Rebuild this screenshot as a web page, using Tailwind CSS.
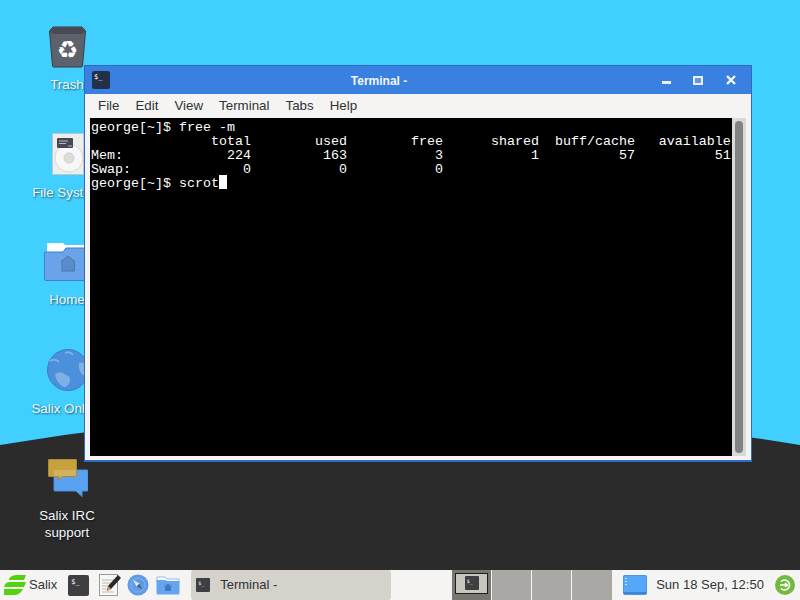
<!DOCTYPE html>
<html lang="en">
  <head>
    <meta charset="UTF-8" />
    <title>Salix Desktop</title>
    <script src="https://cdn.jsdelivr.net/npm/@tailwindcss/browser@4"></script>
  </head>
  <body class="bg-[#40cfff]">
    <div class="relative w-[800px] h-[600px] overflow-hidden bg-[#40cfff] font-['Liberation_Sans',sans-serif]">
      <!-- wallpaper hill -->
      <svg class="absolute left-0 top-0" width="800" height="600" viewBox="0 0 800 600">
        <path d="M0 445 Q 400 378 800 445 L800 600 L0 600 Z" fill="#2b2b2b" />
      </svg>

      <!-- Desktop icons -->
      <div class="absolute left-[17px] top-[26px] w-[100px] flex flex-col items-center text-[13.330px] leading-[16px] text-[#eef8fb] [text-shadow:1px_1px_2px_rgba(0,0,0,0.6)]">
        <svg class="ml-[2px]" width="38" height="42" viewBox="0 0 38 42">
          <path d="M0.5 5 L4 1 H33 L36.500 5 L33.500 40 Q33.400 41 32 41 H5 Q3.600 41 3.500 40 Z" fill="#5d616b" stroke="#3a3d45" />
          <path d="M1 6 L4 2 H33 L36 6 L32 8 H5 Z" fill="#474a52" />
          <text x="18.500" y="32" text-anchor="middle" font-family="DejaVu Sans" font-size="24" fill="#fff" style="text-shadow:none">♻</text>
        </svg>
        <span class="mt-[9px]">Trash</span>
      </div>
      <div class="absolute left-[17px] top-[133px] w-[100px] flex flex-col items-center text-[13.330px] leading-[16px] text-[#eef8fb] [text-shadow:1px_1px_2px_rgba(0,0,0,0.6)]">
        <svg class="ml-[2px]" width="32" height="42" viewBox="0 0 32 42">
          <rect x="0.5" y="0.5" width="31" height="41" rx="1" fill="#eceded" stroke="#c3c6c8" />
          <circle cx="17" cy="25" r="14" fill="#f7f7f7" stroke="#d8d8d8" />
          <circle cx="17" cy="25" r="5" fill="#dcdcdc" stroke="#cfcfcf" />
          <rect x="5" y="5" width="16" height="10" rx="1" fill="#454852" />
          <path d="M7 8 H16 M7 10.5 H14 M16 13 H20" stroke="#b5b7bc" stroke-width="1" />
        </svg>
        <span class="mt-[10px] whitespace-nowrap">File System</span>
      </div>
      <div class="absolute left-[17px] top-[243px] w-[100px] flex flex-col items-center text-[13.330px] leading-[16px] text-[#eef8fb] [text-shadow:1px_1px_2px_rgba(0,0,0,0.6)]">
        <svg class="ml-[2px]" width="48" height="39" viewBox="0 0 48 39">
          <path d="M3 9 V1 Q3 0 4 0 H19 L21 2 H48 V10 H3 Z" fill="#fff" />
          <path d="M1.500 9 H19 L22 5 H47.500 V37.500 H1.500 Q0.500 37.500 0.500 36.500 V10 Q0.500 9 1.500 9 Z" fill="#6ba3ea" stroke="#3f7fd0" />
          <path d="M17.5 18 L24 13 L30.500 18 V28 H18 V18 Z" fill="#5a8cc9" stroke="#4a78b2" />
        </svg>
        <span class="mt-[10px]">Home</span>
      </div>
      <div class="absolute left-[17px] top-[349px] w-[100px] flex flex-col items-center text-[13.330px] leading-[16px] text-[#eef8fb] [text-shadow:1px_1px_2px_rgba(0,0,0,0.6)]">
        <svg class="ml-[2px]" width="42" height="42" viewBox="0 0 42 42">
          <circle cx="21" cy="21" r="20.500" fill="#4c8fdb" stroke="#3f7cc6" />
          <path d="M8 25 Q14 21 19 26 Q24 27 23 33 Q19 40 15 37 Q9 33 8 25 Z" fill="#7cb0e6" />
          <path d="M32 14 Q38 12 40 20 Q40 26 36 26 Q31 22 32 14 Z" fill="#7cb0e6" />
          <path d="M3 12 Q8 9 12 13 M18 4 Q23 2 26 6" stroke="#7cb0e6" stroke-width="2" fill="none" />
        </svg>
        <span class="mt-[10px] whitespace-nowrap">Salix Online</span>
      </div>
      <div class="absolute left-[17px] top-[459px] w-[100px] flex flex-col items-center text-[13.330px] leading-[17px] text-[#eef8fb] [text-shadow:1px_1px_2px_rgba(0,0,0,0.6)]">
        <svg class="ml-[2px]" width="40" height="38" viewBox="0 0 40 38">
          <path d="M6 11 H39 Q40 11 40 12 V31 Q40 32 39 32 H34 V37.500 L28 32 H7 Q6 32 6 31 Z" fill="#5aa2f0" stroke="#4a8edb" />
          <path d="M0.500 1 Q0.500 0.500 1 0.500 H28 Q28.500 0.500 28.500 1 V17 Q28.500 17.500 28 17.500 H14 L10 21 V17.500 H1 Q0.500 17.500 0.500 17 Z" fill="#c6a13e" stroke="#a9893a" />
          <path d="M6 11 H28 V17 H14 L12 19 V17 H6 Z" fill="#d2b25f" />
        </svg>
        <span class="mt-[10px] text-center">Salix IRC<br />support</span>
      </div>

      <!-- Terminal window -->
      <div class="absolute left-[84px] top-[65px] w-[668px] h-[397px] flex flex-col border border-b-2 border-[#2a6cc8] bg-[#f5f4f2]">
        <div class="relative h-[28px] bg-[#3a80e0] flex items-center">
          <div class="ml-[7px] w-[18px] h-[18px] rounded-[2px] bg-[#22304a] text-white text-[7px] leading-[8px] font-['DejaVu_Sans_Mono',monospace] pl-[2px] pt-[2px]">$_</div>
          <div class="absolute inset-x-0 top-[7px] pr-[78px] text-center text-[#f2f6fd] font-bold text-[12px] leading-[16px]">Terminal -</div>
          <div class="ml-auto flex items-center">
            <div class="w-[9px] h-[3px] bg-[#e9f1fc] mt-[5px] mr-[22px]"></div>
            <div class="w-[10px] h-[9px] border-2 border-[#e9f1fc] bg-[#5e97e6] mr-[23px]"></div>
            <svg class="mr-[15px]" width="10" height="10" viewBox="0 0 10 10"><path d="M1 1 L9 9 M9 1 L1 9" stroke="#f2f6fd" stroke-width="2.400" /></svg>
          </div>
        </div>
        <div class="h-[24px] ml-[5px] flex items-center pl-[5px] gap-[16px] text-[13.330px] text-[#2e3436]">
          <span class="ml-[3px]">File</span>
          <span>Edit</span>
          <span>View</span>
          <span>Terminal</span>
          <span>Tabs</span>
          <span>Help</span>
        </div>
        <div class="flex h-[338px] ml-[5px] mr-[4px]">
          <pre class="w-[642px] bg-black text-white pl-[1px] pt-[3px] font-['Liberation_Mono',monospace] text-[13.330px] leading-[14px]">george[~]$ free -m
               total        used        free      shared  buff/cache   available
Mem:             224         163           3           1          57          51
Swap:              0           0           0
george[~]$ scrot<span class="relative -top-[2px] inline-block w-[8px] h-[14px] bg-white align-top"></span></pre>
          <div class="w-[14px] bg-[#d9d9d7] flex justify-center pt-[3px] pb-[3px]">
            <div class="w-[8px] h-full rounded-full bg-[#808382]"></div>
          </div>
        </div>
      </div>

      <!-- Panel -->
      <div class="absolute left-0 bottom-0 w-[800px] h-[30px] bg-[#f5f4f2] flex items-center text-[13px] text-[#2e3436]">
        <svg class="ml-[3px]" width="23" height="22" viewBox="0 0 23 22">
          <path d="M6 5 Q8 1 14 1 H23 L21 6 H6 Z M1 13 Q2 8 7 8 H23 L21 13 Z M1 15 H20 Q17 21 11 21 H1 Z" fill="#54d10f" />
        </svg>
        <span class="ml-[3px]">Salix</span>
        <div class="ml-[11px] w-[21px] h-[21px] rounded-[2px] bg-[#3d3f42] text-white text-[7px] leading-[8px] font-['DejaVu_Sans_Mono',monospace] pl-[3px] pt-[3px]">$_</div>
        <svg class="ml-[9px]" width="24" height="24" viewBox="0 0 24 24">
          <rect x="1.500" y="1.500" width="18" height="21" fill="#f7f7f5" stroke="#9a9a98" />
          <path d="M4 7 H16 M4 10 H14 M4 13 H12 M4 16 H10 M4 19 H16" stroke="#b9b9b7" />
          <path d="M20 2 L23 5 L13 16 L9 18 L10 13 Z" fill="#26282b" />
          <path d="M10 13 L13 16 L9 18 Z" fill="#d9a441" />
        </svg>
        <svg class="ml-[5px]" width="22" height="22" viewBox="0 0 22 22">
          <circle cx="11" cy="11" r="10.500" fill="#5f9be6" />
          <circle cx="11" cy="11" r="7" fill="#5f9be6" stroke="#86b5ee" />
          <path d="M6 6 L12.500 9.500 L16 16 L9.500 12.500 Z" fill="#dfe9f6" />
          <path d="M9.500 12.500 L12.500 9.500 L16 16 Z" fill="#3f5f8f" />
        </svg>
        <svg class="ml-[7px]" width="24" height="20" viewBox="0 0 24 20">
          <path d="M1 2 H9 L11 4 H23 V8 H1 Z" fill="#fff" stroke="#8fbcf0" />
          <path d="M0.500 5 H9 L11 6 H23.500 V18.500 Q23.500 19.500 22.500 19.500 H1.500 Q0.500 19.500 0.500 18.500 Z" fill="#67a4ee" />
          <path d="M8 12 L12 8.500 L16 12 H15 V16 H9 V12 Z" fill="#3f77c2" />
        </svg>
        <div class="ml-[11px] w-[200px] h-[30px] bg-[#d5d1cb] rounded-[3px] flex items-center">
          <div class="ml-[5px] w-[14px] h-[14px] rounded-[1px] bg-[#3d3f42] text-white text-[5px] leading-[6px] font-['DejaVu_Sans_Mono',monospace] pl-[2px] pt-[2px]">$_</div>
          <span class="ml-[10px]">Terminal -</span>
        </div>
        <div class="ml-[61px] flex h-[30px]">
          <div class="w-[40px] bg-[#7a7771] flex items-center justify-center border-r border-[#f5f4f2]">
            <div class="w-[33px] h-[21px] mb-[4px] bg-[#c9c6c0] border border-[#1e1e1e] flex items-center justify-center">
              <div class="w-[14px] h-[14px] rounded-[1px] bg-[#3d3f42] text-white text-[5px] leading-[6px] font-['DejaVu_Sans_Mono',monospace] pl-[2px] pt-[2px]">$_</div>
            </div>
          </div>
          <div class="w-[40px] bg-[#aaa8a4] border-r border-[#f5f4f2]"></div>
          <div class="w-[40px] bg-[#aaa8a4] border-r border-[#f5f4f2]"></div>
          <div class="w-[40px] bg-[#aaa8a4]"></div>
        </div>
        <svg class="ml-[11px]" width="24" height="20" viewBox="0 0 24 20">
          <rect x="0.500" y="0.500" width="23" height="19" rx="1" fill="#55a7f7" stroke="#4a94e0" />
          <path d="M3 3 V4 M3 6 V7 M3 9 V10" stroke="#fff" stroke-width="1.500" />
          <rect x="1" y="17" width="22" height="2" fill="#3d86d6" />
        </svg>
        <span class="ml-[9px] whitespace-nowrap">Sun 18 Sep, 12:50</span>
        <svg class="ml-[11px]" width="20" height="20" viewBox="0 0 20 20">
          <circle cx="10" cy="10" r="10" fill="#73b941" />
          <path d="M6 6.500 A5 5 0 1 1 6 13.500" fill="none" stroke="#fff" stroke-width="1.600" />
          <path d="M5 10 H12 M10 8 L12.500 10 L10 12" fill="none" stroke="#fff" stroke-width="1.600" />
        </svg>
      </div>
    </div>
  </body>
</html>
